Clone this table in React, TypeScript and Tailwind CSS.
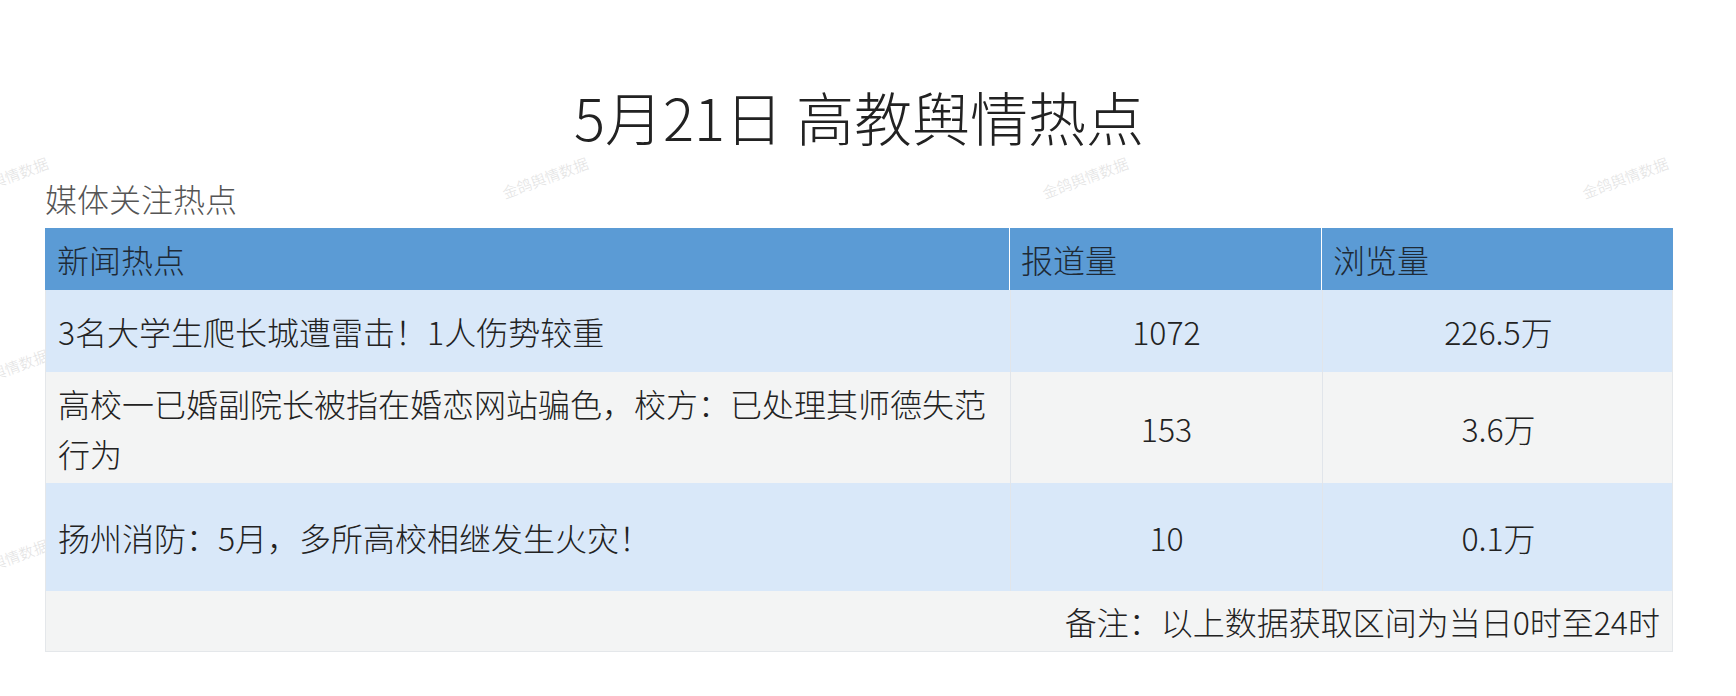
import React from 'react';

const rows = [
  { title: '3名大学生爬长城遭雷击！1人伤势较重', reports: '1072', views: '226.5万', bg: 'bg-[#d9e8f9]', h: 'h-[82px]' },
  { title: '高校一已婚副院长被指在婚恋网站骗色，校方：已处理其师德失范行为', reports: '153', views: '3.6万', bg: 'bg-[#f3f4f4]', h: 'h-[111px]' },
  { title: '扬州消防：5月，多所高校相继发生火灾！', reports: '10', views: '0.1万', bg: 'bg-[#d9e8f9]', h: 'h-[108px]' },
];

const marks = [
  { x: -40, y: 170 },
  { x: 500, y: 170 },
  { x: 1040, y: 170 },
  { x: 1580, y: 170 },
  { x: -40, y: 362 },
  { x: -40, y: 552 },
];

const App: React.FC = () => {
  return (
    <div className="relative w-[1736px] h-[696px] overflow-hidden bg-white text-[#222] font-light font-['Noto_Sans_CJK_SC','Noto_Sans',sans-serif]">
      {/* watermark layer */}
      <div className="absolute inset-0 pointer-events-none">
        {marks.map((m, i) => (
          <span
            key={i}
            className="absolute text-[15px] leading-none text-[#e2e2e2] -rotate-[20deg] whitespace-nowrap"
            style={{ left: m.x, top: m.y }}
          >
            金鸽舆情数据
          </span>
        ))}
      </div>

      <div className="relative ml-[45px] w-[1628px] pt-[87px]">
        <h1 className="text-center text-[58px] leading-[58px] font-light text-[#222]">5月21日 高教舆情热点</h1>
        <div className="mt-[33px] text-[32px] leading-[40px] text-[#555]">媒体关注热点</div>

        <div className="mt-[10px] text-[32px]">
          <div className="grid grid-cols-[964px_312px_352px] h-[62px] bg-[#5b9bd5] text-[#1e2a36]">
            <div className="flex items-center px-[12px]">新闻热点</div>
            <div className="flex items-center px-[11px] border-l border-white">报道量</div>
            <div className="flex items-center px-[11px] border-l border-white">浏览量</div>
          </div>

          {rows.map((r) => (
            <div key={r.title} className={`grid grid-cols-[964px_312px_352px] ${r.h} ${r.bg} border-x border-[#e4e7ea]`}>
              <div className="flex items-center px-[12px] leading-[50px]">{r.title}</div>
              <div className="flex items-center justify-center border-l border-[#e1e5ea]">{r.reports}</div>
              <div className="flex items-center justify-center border-l border-[#e1e5ea]">{r.views}</div>
            </div>
          ))}

          <div className="flex items-center justify-end h-[61px] bg-[#f3f4f4] border-x border-b border-[#e4e7ea] px-[12px]">
            备注：以上数据获取区间为当日0时至24时
          </div>
        </div>
      </div>
    </div>
  );
};

export default App;
